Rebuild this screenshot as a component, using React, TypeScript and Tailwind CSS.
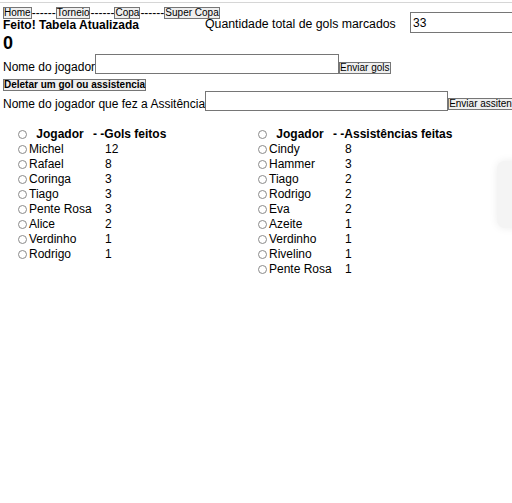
import React from 'react';

const gols = [
  ['Michel', '12'],
  ['Rafael', '8'],
  ['Coringa', '3'],
  ['Tiago', '3'],
  ['Pente Rosa', '3'],
  ['Alice', '2'],
  ['Verdinho', '1'],
  ['Rodrigo', '1'],
];

const assistencias = [
  ['Cindy', '8'],
  ['Hammer', '3'],
  ['Tiago', '2'],
  ['Rodrigo', '2'],
  ['Eva', '2'],
  ['Azeite', '1'],
  ['Verdinho', '1'],
  ['Rivelino', '1'],
  ['Pente Rosa', '1'],
];

const btn =
  'h-[12px] border border-[#767676] bg-[#efefef] px-0 text-[10px] leading-[10px] text-black whitespace-nowrap shrink-0';

const Radio = () => (
  <span className="inline-block w-[9px] h-[9px] rounded-full border border-[#8a8a8a] bg-white shrink-0" />
);

const Tabela: React.FC<{ titulo: string; dados: string[][] }> = ({ titulo, dados }) => (
  <div className="w-[240px] shrink-0">
    <div className="flex items-center h-[15px] font-bold">
      <Radio />
      <span className="w-[66px] text-center">Jogador</span>
      <span className="whitespace-nowrap">- -{titulo}</span>
    </div>
    {dados.map(([nome, qtd], i) => (
      <div key={i} className="flex items-center h-[15px]">
        <Radio />
        <span className="w-[76px] ml-[2px] whitespace-nowrap">{nome}</span>
        <span>{qtd}</span>
      </div>
    ))}
  </div>
);

export default function App() {
  return (
    <div
      className="relative w-[512px] h-[503px] overflow-hidden bg-white text-black text-[12px] leading-[14px]"
      style={{ fontFamily: '"Liberation Sans", Arial, sans-serif' }}
    >
      <div className="h-[2px]" />
      <div className="h-[1px] bg-[#d6d6d6]" />

      {/* navegação */}
      <div className="flex items-center h-[13px] mt-[3px] pl-[3px]">
        <button className={btn}>Home</button>
        <span className="leading-[12px]">------</span>
        <button className={btn}>Torneio</button>
        <span className="leading-[12px]">------</span>
        <button className={btn}>Copa</button>
        <span className="leading-[12px]">------</span>
        <button className={btn}>Super Copa</button>
      </div>

      <div className="flex items-start h-[21px] mt-[-7px] pl-[3px]">
        <span className="w-[202px] mt-[6px] font-bold whitespace-nowrap shrink-0">Feito! Tabela Atualizada</span>
        <span className="w-[205px] mt-[5px] text-[12.3px] whitespace-nowrap shrink-0">Quantidade total de gols marcados</span>
        <input
          className="w-[243px] h-[21px] border border-[#767676] px-[2px] text-[12px] shrink-0"
          defaultValue="33"
          readOnly
        />
      </div>

      <div className="pl-[3px] h-[21px] text-[18px] leading-[21px] font-bold">0</div>

      <div className="flex items-end h-[20px] pl-[3px]">
        <span className="whitespace-nowrap">Nome do jogador</span>
        <input className="w-[244px] h-[20px] border border-[#767676] shrink-0" readOnly />
        <button className={btn}>Enviar gols</button>
      </div>

      <div className="pl-[3px] mt-[3px]">
        <button className={btn + ' font-bold'}>Deletar um gol ou assistencia</button>
      </div>

      <div className="flex items-end h-[20px] pl-[3px]">
        <span className="whitespace-nowrap">Nome do jogador que fez a Assitência</span>
        <input className="w-[243px] h-[20px] border border-[#767676] shrink-0" readOnly />
        <button className={btn + ' mb-[1px]'}>Enviar assitencia</button>
      </div>

      <div className="flex mt-[16px] pl-[18px] leading-[15px]">
        <Tabela titulo="Gols feitos" dados={gols} />
        <Tabela titulo="Assistências feitas" dados={assistencias} />
      </div>

      <div className="absolute left-[497px] top-[161px] w-[40px] h-[67px] rounded-lg bg-[#f4f4f4] shadow-[0_0_8px_rgba(0,0,0,0.08)]" />
    </div>
  );
}
